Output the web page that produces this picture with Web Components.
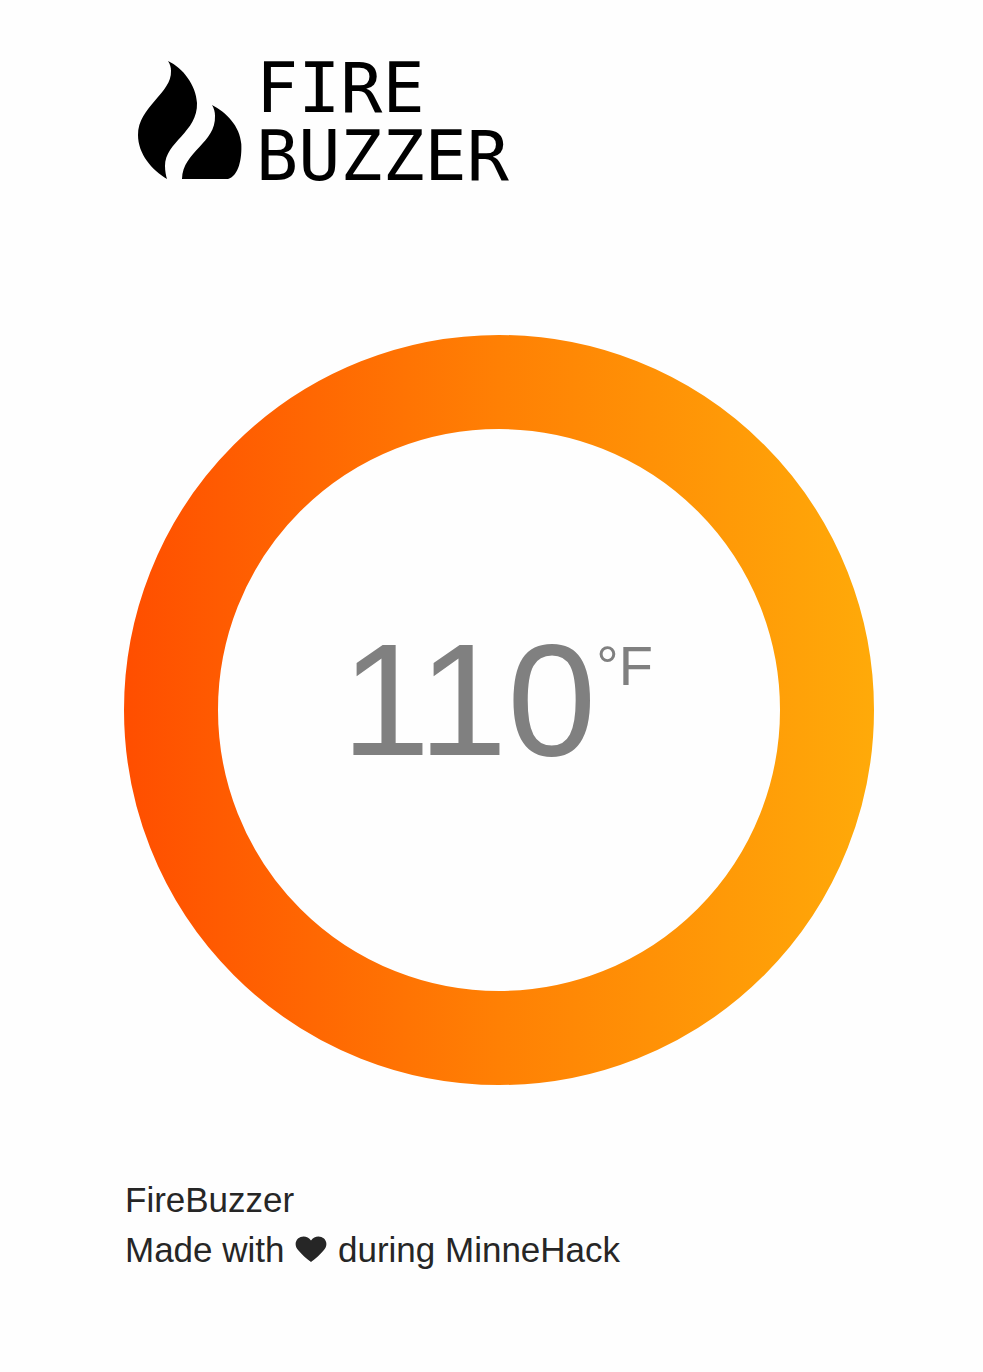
<!DOCTYPE html>
<html lang="en">
<head>
<meta charset="utf-8">
<meta name="viewport" content="width=device-width, initial-scale=1">
<title>FireBuzzer</title>
<style>
body { margin: 0; background: #fefefe; color: #262626; font-family: "Liberation Sans", Arial, sans-serif; }
</style>
</head>
<body>
<fire-app></fire-app>
<script>
const define = (name, html) => customElements.define(name, class extends HTMLElement {
  constructor() {
    super();
    this.attachShadow({ mode: "open" }).innerHTML = html;
  }
});

define("fire-logo", `
<style>
:host { display: flex; align-items: flex-start; gap: 14px; color: #000; }
svg { width: 106px; height: 120px; margin-top: 6px; flex: none; }
h1 { margin: 0; font: 400 70px/68px "DejaVu Sans Mono", monospace; }
span { display: block; }
</style>
<svg viewBox="0 0 106 120" aria-hidden="true">
  <path d="M32 1C47 8 60 25 61 43C62 72 29 82 29 106C29 111 30 116 31 119C16 110 2 94 2 75C2 47 36 33 35 11C35 7 34 4 32 1Z"/>
  <path d="M76 45C90 52 104 66 105.300 84C106 98 103 116 92 119H46C47 91 80 83 79 56C79 52 78 48 76 45Z"/>
</svg>
<h1><span>FIRE</span><span>BUZZER</span></h1>
`);

define("temperature-gauge", `
<style>
:host { display: grid; place-items: center; }
svg, .value { grid-area: 1 / 1; }
svg { display: block; width: 100%; }
.value { display: flex; align-items: flex-start; color: #808080; font-size: 160px; line-height: 160px; padding: 0 4px 20px 0; }
sup { font-size: 56px; line-height: 92px; }
</style>
<svg viewBox="0 0 750 750" aria-hidden="true">
  <defs><linearGradient id="heat" gradientUnits="userSpaceOnUse" x1="0" y1="0" x2="750" y2="0"><stop stop-color="#ff4e00"/><stop offset=".5" stop-color="#ff8004"/><stop offset="1" stop-color="#ffaa09"/></linearGradient></defs>
  <circle cx="375" cy="375" r="328" fill="none" stroke="url(#heat)" stroke-width="94"/>
</svg>
<div class="value"><slot></slot><sup><slot name="unit"></slot></sup></div>
`);

define("fire-footer", `
<style>
:host { display: block; font-size: 35px; line-height: 50px; }
p { margin: 0; }
svg { width: 32px; height: 26px; margin: 0 1px; fill: currentColor; }
</style>
<p>FireBuzzer</p>
<p>Made with <svg viewBox="0 0 32 26" role="img" aria-label="love"><path d="M16 4.500C19 0 25-1 29 2.500C32.500 6 32 11 28.500 14.500C25 18.500 21 22.500 16 26C11 22.500 7 18.500 3.500 14.500C0 11 -.5 6 3 2.500C7-1 13 0 16 4.500Z"/></svg> during MinneHack</p>
`);

define("fire-app", `
<style>
:host { display: block; padding: 54px 109px 96px 124px; }
header { padding-left: 12px; }
main { padding: 145px 0 90px; }
footer { padding-left: 1px; }
</style>
<header><fire-logo></fire-logo></header>
<main><temperature-gauge>110<span slot="unit">°F</span></temperature-gauge></main>
<footer><fire-footer></fire-footer></footer>
`);
</script>
</body>
</html>
